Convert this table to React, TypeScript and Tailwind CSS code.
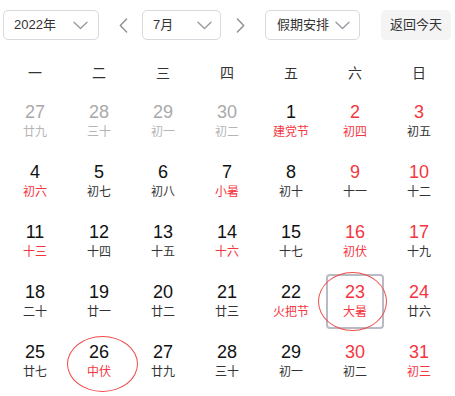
import React from "react";

type Day = { n: number; l: string; nc: string; lc: string; sel?: boolean; ring?: "a" | "b" };

const G = "text-[#a9a9a9]";
const GL = "text-[#b5b5b5]";
const R = "text-[#f5363f]";
const K = "text-[#111111]";
const D = "text-[#333333]";

const days: Day[] = [
  { n: 27, l: "廿九", nc: G, lc: GL },
  { n: 28, l: "三十", nc: G, lc: GL },
  { n: 29, l: "初一", nc: G, lc: GL },
  { n: 30, l: "初二", nc: G, lc: GL },
  { n: 1, l: "建党节", nc: K, lc: R },
  { n: 2, l: "初四", nc: R, lc: R },
  { n: 3, l: "初五", nc: R, lc: D },
  { n: 4, l: "初六", nc: K, lc: R },
  { n: 5, l: "初七", nc: K, lc: D },
  { n: 6, l: "初八", nc: K, lc: D },
  { n: 7, l: "小暑", nc: K, lc: R },
  { n: 8, l: "初十", nc: K, lc: D },
  { n: 9, l: "十一", nc: R, lc: D },
  { n: 10, l: "十二", nc: R, lc: D },
  { n: 11, l: "十三", nc: K, lc: R },
  { n: 12, l: "十四", nc: K, lc: D },
  { n: 13, l: "十五", nc: K, lc: D },
  { n: 14, l: "十六", nc: K, lc: R },
  { n: 15, l: "十七", nc: K, lc: D },
  { n: 16, l: "初伏", nc: R, lc: R },
  { n: 17, l: "十九", nc: R, lc: D },
  { n: 18, l: "二十", nc: K, lc: D },
  { n: 19, l: "廿一", nc: K, lc: D },
  { n: 20, l: "廿二", nc: K, lc: D },
  { n: 21, l: "廿三", nc: K, lc: D },
  { n: 22, l: "火把节", nc: K, lc: R },
  { n: 23, l: "大暑", nc: R, lc: R, sel: true, ring: "a" },
  { n: 24, l: "廿六", nc: R, lc: D },
  { n: 25, l: "廿七", nc: K, lc: D },
  { n: 26, l: "中伏", nc: K, lc: R, ring: "b" },
  { n: 27, l: "廿九", nc: K, lc: D },
  { n: 28, l: "三十", nc: K, lc: D },
  { n: 29, l: "初一", nc: K, lc: D },
  { n: 30, l: "初二", nc: R, lc: D },
  { n: 31, l: "初三", nc: R, lc: R },
];

const Chevron = () => (
  <svg width="15" height="9" viewBox="0 0 15 9" fill="none">
    <path d="M1 1.2 L7.5 7.6 L14 1.2" stroke="#9a9aa2" strokeWidth="1.4" strokeLinecap="round" strokeLinejoin="round" />
  </svg>
);

const Arrow = ({ dir }: { dir: "l" | "r" }) => (
  <svg width="9" height="15" viewBox="0 0 9 15" fill="none">
    <path
      d={dir === "l" ? "M7.6 1 L1.3 7.5 L7.6 14" : "M1.4 1 L7.7 7.5 L1.4 14"}
      stroke="#8e8e96"
      strokeWidth="1.4"
      strokeLinecap="round"
      strokeLinejoin="round"
    />
  </svg>
);

export default function App() {
  const font = { fontFamily: '"Liberation Sans", "Noto Sans CJK SC", sans-serif' };
  return (
    <div className="w-[455px] h-[396px] bg-white overflow-hidden" style={font}>
      <div className="flex items-center pt-[10px] pl-[3px] text-[13px] text-[#333333]">
        <div className="w-[96px] h-[30px] border border-[#d8d9de] rounded-[5px] flex items-center justify-between pl-[10px] pr-[10px]">
          <span>2022年</span>
          <Chevron />
        </div>
        <div className="ml-[14px] w-[20px] h-[30px] flex items-center justify-center">
          <Arrow dir="l" />
        </div>
        <div className="ml-[9px] w-[79px] h-[30px] border border-[#d8d9de] rounded-[5px] flex items-center justify-between pl-[10px] pr-[8px]">
          <span>7月</span>
          <Chevron />
        </div>
        <div className="ml-[9px] w-[20px] h-[30px] flex items-center justify-center">
          <Arrow dir="r" />
        </div>
        <div className="ml-[15px] w-[95px] h-[30px] border border-[#d8d9de] rounded-[5px] flex items-center justify-between pl-[11px] pr-[9px]">
          <span>假期安排</span>
          <Chevron />
        </div>
        <div className="ml-[21px] w-[70px] h-[30px] rounded-[5px] bg-[#f4f4f5] flex items-center justify-center">
          返回今天
        </div>
      </div>

      <div className="ml-[3px] w-[448px] grid grid-cols-7 mt-[15px] h-[36px] items-center text-[14px] text-[#333333]">
        {["一", "二", "三", "四", "五", "六", "日"].map((w) => (
          <div key={w} className="text-center">
            {w}
          </div>
        ))}
      </div>

      <div className="ml-[3px] w-[448px] grid grid-cols-7 mt-[4px] gap-y-[5px]">
        {days.map((d, i) => (
          <div key={i} className="relative h-[55px] flex flex-col items-center pt-[6px]">
            {d.sel && (
              <span className="absolute left-[3px] right-[3px] top-[-1px] h-[55px] border-2 border-[#b9bbc4] rounded-[4px]" />
            )}
            {d.ring === "a" && (
              <span className="absolute left-[-5px] top-[-3px] w-[69px] h-[59px] border border-[#ee4b4b] rounded-[50%]" />
            )}
            {d.ring === "b" && (
              <span className="absolute left-[0px] top-[1px] w-[71px] h-[56px] border border-[#ee4b4b] rounded-[50%]" />
            )}
            <span className={`text-[18px] leading-[22px] ${d.nc}`}>{d.n}</span>
            <span className={`text-[12px] leading-[18px] ${d.lc}`}>{d.l}</span>
          </div>
        ))}
      </div>
    </div>
  );
}
